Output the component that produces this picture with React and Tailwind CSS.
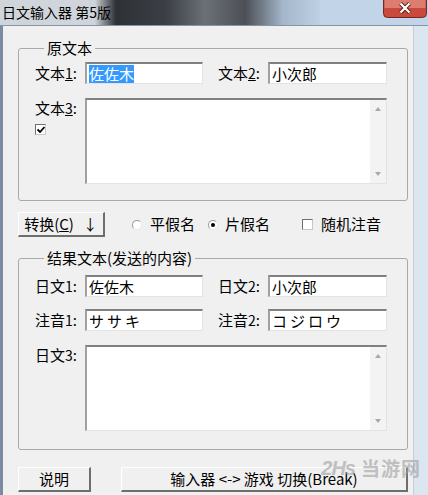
import React from "react";

const font = { fontFamily: '"Noto Sans CJK SC", "Noto Sans", sans-serif' };

// sunken edit box, classic win32 look
function Edit({ className = "", children }) {
  return (
    <div
      className={`bg-white border-t-2 border-l-2 border-r border-b border-t-[#808080] border-l-[#a0a0a0] border-r-[#e3e3e3] border-b-[#e3e3e3] flex items-center pl-[2px] text-[15px] leading-[18px] ${className}`}
    >
      {children}
    </div>
  );
}

function Memo({ className = "" }) {
  return (
    <div
      className={`bg-white border-t-2 border-l-2 border-r border-b border-t-[#808080] border-l-[#a0a0a0] border-r-[#e3e3e3] border-b-[#e3e3e3] flex justify-end ${className}`}
    >
      <div className="w-[16px] h-full bg-[#f3f3f3] flex flex-col items-center justify-between py-[7px]">
        <svg width="6" height="4" viewBox="0 0 6 4">
          <path d="M0 4 L3 0 L6 4 Z" fill="#a8a8a8" />
        </svg>
        <svg width="6" height="4" viewBox="0 0 6 4">
          <path d="M0 0 L3 4 L6 0 Z" fill="#a8a8a8" />
        </svg>
      </div>
    </div>
  );
}

function Button({ className = "", children }) {
  return (
    <div
      className={`h-[25px] bg-[#f0f0f0] border-t border-l border-r-2 border-b-2 border-t-white border-l-white border-r-[#6e6e6e] border-b-[#6e6e6e] flex items-center justify-center text-[15px] ${className}`}
    >
      {children}
    </div>
  );
}

function Label({ text, num, underline }) {
  return (
    <div className="w-[50px] text-[15px] leading-[18px] whitespace-nowrap">
      {text}
      <span className={`text-[14px] ${underline ? "underline" : ""}`}>{num}</span>:
    </div>
  );
}

function Radio({ checked }) {
  return (
    <div className="w-[10px] h-[10px] rounded-full bg-white border border-t-[#9a9a9a] border-l-[#9a9a9a] border-r-[#e8e8e8] border-b-[#e8e8e8] flex items-center justify-center">
      {checked && <div className="w-[4px] h-[4px] rounded-full bg-black" />}
    </div>
  );
}

function Check({ checked }) {
  return (
    <div className="w-[11px] h-[11px] bg-white border border-t-[#6f6f6f] border-l-[#6f6f6f] border-r-[#c8c8c8] border-b-[#c8c8c8] flex items-center justify-center">
      {checked && (
        <svg width="8" height="7" viewBox="0 0 8 7">
          <path d="M0.5 3.5 L3 6 L7.5 1" stroke="#000" strokeWidth="1.8" fill="none" />
        </svg>
      )}
    </div>
  );
}

export default function App() {
  return (
    <div className="w-[428px] h-[495px] overflow-hidden flex flex-col bg-[#f0f0f0] text-black" style={font}>
      {/* title bar, blurred aero glass behind the caption */}
      <div className="relative h-[26px] shrink-0 flex border-b border-[#8595a6]">
        <div className="w-[95px] bg-[#d0d5db]" />
        <div className="w-[70px] bg-linear-to-r from-[#cfd4da] via-[#2e3237] via-30% to-[#3b3f45]" />
        <div className="w-[80px] bg-linear-to-r from-[#3b3f45] via-[#6c7077] to-[#4c5056]" />
        <div className="w-[75px] bg-linear-to-r from-[#4c5056] via-[#a3b6ca] to-[#bdd0e4]" />
        <div className="flex-1 bg-[#c2d4e8] flex justify-end">
          <svg width="46" height="18" viewBox="0 0 46 18">
            <path d="M1.5 0 V13.5 Q1.5 17.5 5.5 17.5 H40.5 Q44.5 17.5 44.5 13.5 V0 Z" fill="#c9493c" stroke="#76281f" />
            <path d="M2.5 0 H43.5 V8 H2.5 Z" fill="#dd7c70" />
            <path d="M18.5 3.5 L27.5 12.5 M27.5 3.5 L18.5 12.5" stroke="#5a1c15" strokeWidth="4" />
            <path d="M18.5 3.5 L27.5 12.5 M27.5 3.5 L18.5 12.5" stroke="#ffffff" strokeWidth="2.2" />
          </svg>
        </div>
        <div className="absolute left-[2px] top-[3px] text-[14px] leading-[18px] whitespace-nowrap">日文输入器 第5版</div>
      </div>

      <div className="flex flex-1">
        <div className="w-[3px] bg-[#7a8ca0]" />
        <div className="w-[410px] relative pl-[15px] pr-[5px] pt-[13px]">
          {/* 原文本 */}
          <fieldset className="border border-[#a9a9a9] rounded-[3px] pl-[16px] pb-[16px]">
            <legend className="ml-[9px] px-[3px] text-[15px] leading-[18px]">原文本</legend>
            <div className="mt-[5px] flex items-center h-[22px]">
              <Label text="文本" num="1" underline />
              <Edit className="w-[118px] h-[22px]">
                <span className="bg-[#3399ff] text-white">佐佐木</span>
              </Edit>
              <div className="ml-[15px]">
                <Label text="文本" num="2" underline />
              </div>
              <Edit className="w-[119px] h-[22px]">小次郎</Edit>
            </div>
            <div className="mt-[14px] flex">
              <div className="w-[50px] pt-[1px]">
                <Label text="文本" num="3" underline />
                <div className="mt-[7px]">
                  <Check checked />
                </div>
              </div>
              <Memo className="w-[302px] h-[86px]" />
            </div>
          </fieldset>

          {/* convert row */}
          <div className="mt-[11px] h-[25px] flex items-center text-[15px]">
            <Button className="w-[87px]">
              转换(<span className="underline">C</span>)<span className="ml-[9px]">↓</span>
            </Button>
            <div className="ml-[27px]">
              <Radio />
            </div>
            <span className="ml-[8px]">平假名</span>
            <div className="ml-[13px]">
              <Radio checked />
            </div>
            <span className="ml-[7px]">片假名</span>
            <div className="ml-[32px]">
              <Check />
            </div>
            <span className="ml-[8px]">随机注音</span>
          </div>

          {/* 结果文本 */}
          <fieldset className="mt-[12px] border border-[#a9a9a9] rounded-[3px] pl-[16px] pb-[18px]">
            <legend className="ml-[9px] px-[3px] text-[15px] leading-[18px]">结果文本(发送的内容)</legend>
            <div className="mt-[8px] flex items-center h-[22px]">
              <Label text="日文" num="1" />
              <Edit className="w-[118px] h-[22px]">佐佐木</Edit>
              <div className="ml-[15px]">
                <Label text="日文" num="2" />
              </div>
              <Edit className="w-[119px] h-[22px]">小次郎</Edit>
            </div>
            <div className="mt-[12px] flex items-center h-[22px]">
              <Label text="注音" num="1" />
              <Edit className="w-[118px] h-[22px] tracking-[3px]">ササキ</Edit>
              <div className="ml-[15px]">
                <Label text="注音" num="2" />
              </div>
              <Edit className="w-[119px] h-[22px] tracking-[3px]">コジロウ</Edit>
            </div>
            <div className="mt-[14px] flex">
              <div className="w-[50px] pt-[1px]">
                <Label text="日文" num="3" />
              </div>
              <Memo className="w-[302px] h-[86px]" />
            </div>
          </fieldset>

          {/* bottom buttons */}
          <div className="mt-[17px] flex">
            <Button className="w-[73px]">说明</Button>
            <Button className="w-[287px] ml-[30px]">
              输入器 &lt;-&gt; 游戏 切换(Break)
            </Button>
          </div>

          {/* watermark */}
          <div className="absolute right-[-8px] bottom-[12px] flex items-center gap-[6px] text-[#a0a0a0] opacity-60 pointer-events-none">
            <span className="text-[20px] font-bold italic tracking-[-1px]" style={{ fontFamily: '"Liberation Sans", sans-serif' }}>
              2Hs
            </span>
            <span className="text-[19px] font-bold tracking-[1px]">当游网</span>
          </div>
        </div>
        <div className="w-[15px] bg-[#dce6f0] border-l border-[#c5cfd9]" />
      </div>
    </div>
  );
}
